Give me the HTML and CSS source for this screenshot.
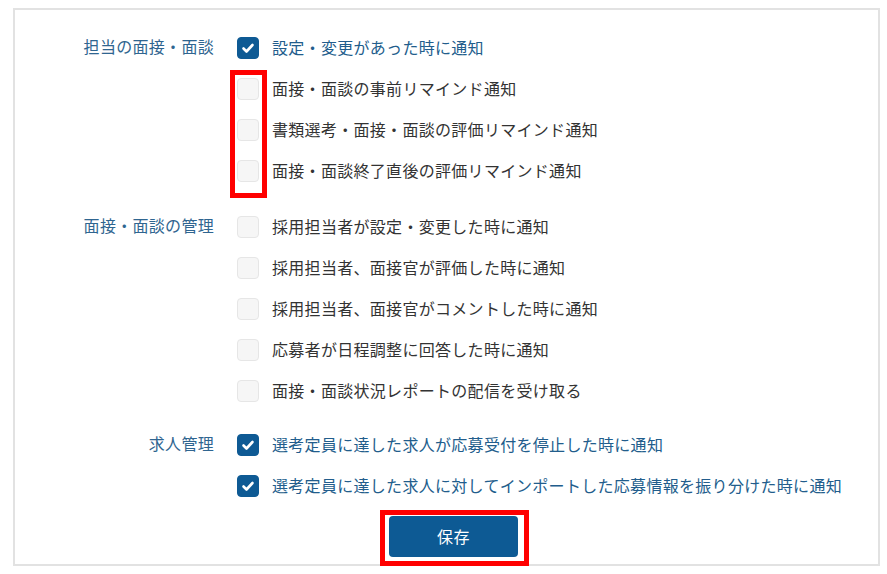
FILE: index.html
```html
<!DOCTYPE html>
<html lang="ja">
<head>
<meta charset="utf-8">
<link rel="stylesheet" href="styles.css">
</head>
<body>
<div class="card">
  <div class="group">
    <div class="label">担当の面接・面談</div>
    <div class="options">
      <label class="opt checked"><span class="box"><svg viewBox="0 0 22 22"><path d="M6.5 11.5l3 3 6-6.5" fill="none" stroke="#fff" stroke-width="2.6" stroke-linecap="round" stroke-linejoin="round"/></svg></span><span class="txt">設定・変更があった時に通知</span></label>
      <label class="opt"><span class="box"></span><span class="txt">面接・面談の事前リマインド通知</span></label>
      <label class="opt"><span class="box"></span><span class="txt">書類選考・面接・面談の評価リマインド通知</span></label>
      <label class="opt"><span class="box"></span><span class="txt">面接・面談終了直後の評価リマインド通知</span></label>
    </div>
  </div>
  <div class="group group-tight">
    <div class="label">面接・面談の管理</div>
    <div class="options">
      <label class="opt"><span class="box"></span><span class="txt">採用担当者が設定・変更した時に通知</span></label>
      <label class="opt"><span class="box"></span><span class="txt">採用担当者、面接官が評価した時に通知</span></label>
      <label class="opt"><span class="box"></span><span class="txt">採用担当者、面接官がコメントした時に通知</span></label>
      <label class="opt"><span class="box"></span><span class="txt">応募者が日程調整に回答した時に通知</span></label>
      <label class="opt"><span class="box"></span><span class="txt">面接・面談状況レポートの配信を受け取る</span></label>
    </div>
  </div>
  <div class="group">
    <div class="label">求人管理</div>
    <div class="options">
      <label class="opt checked"><span class="box"><svg viewBox="0 0 22 22"><path d="M6.5 11.5l3 3 6-6.5" fill="none" stroke="#fff" stroke-width="2.6" stroke-linecap="round" stroke-linejoin="round"/></svg></span><span class="txt">選考定員に達した求人が応募受付を停止した時に通知</span></label>
      <label class="opt checked"><span class="box"><svg viewBox="0 0 22 22"><path d="M6.5 11.5l3 3 6-6.5" fill="none" stroke="#fff" stroke-width="2.6" stroke-linecap="round" stroke-linejoin="round"/></svg></span><span class="txt">選考定員に達した求人に対してインポートした応募情報を振り分けた時に通知</span></label>
    </div>
  </div>
  <div class="footer">
    <button class="save">保存</button>
  </div>
  <div class="mark mark-boxes"></div>
  <div class="mark mark-save"></div>
</div>
</body>
</html>
```

FILE: styles.css
```css
* { box-sizing: border-box; }
html, body { margin: 0; padding: 0; background: #fff; }
body {
  font-family: "Noto Sans CJK JP", "Noto Sans", sans-serif;
  font-size: 16px;
  color: #333;
}
.card {
  position: relative;
  margin: 8px 7px 0 13px;
  height: 558px;
  border: 2px solid #e2e2e2;
  padding-top: 17px;
}
.group {
  display: flex;
  margin-bottom: 15px;
}
.group-tight { margin-bottom: 13px; }
.label {
  width: 199px;
  flex: none;
  text-align: right;
  color: #2f6590;
  line-height: 41px;
  letter-spacing: 0.3px;
  margin-top: -1px;
}
.options {
  margin-left: 23px;
  display: flex;
  flex-direction: column;
}
.opt {
  display: flex;
  align-items: center;
  height: 41px;
}
.box {
  width: 22px;
  height: 22px;
  flex: none;
  border-radius: 4px;
  background: #f6f6f6;
  border: 1px solid #e6e6e6;
  display: flex;
}
.box svg { width: 22px; height: 22px; margin: -1px; }
.opt.checked .box {
  background: #0e5a94;
  border-color: #0e5a94;
}
.txt {
  margin-left: 13px;
  letter-spacing: 0.3px;
  color: #333;
  margin-top: -1px;
}
.opt.checked .txt { color: #225d8c; }
.footer {
  display: flex;
  justify-content: center;
  padding-left: 14px;
  margin-top: -5px;
}
.save {
  width: 129px;
  height: 41px;
  border: 0;
  border-radius: 4px;
  background: #0d5a94;
  color: #fff;
  font-family: inherit;
  font-size: 16px;
  letter-spacing: 0.5px;
  padding-bottom: 3px;
}
.mark {
  position: absolute;
  border: 5px solid #ff0000;
}
.mark-boxes { left: 215px; top: 60px; width: 37px; height: 128px; }
.mark-save { left: 365px; top: 500px; width: 149px; height: 56px; }
```
